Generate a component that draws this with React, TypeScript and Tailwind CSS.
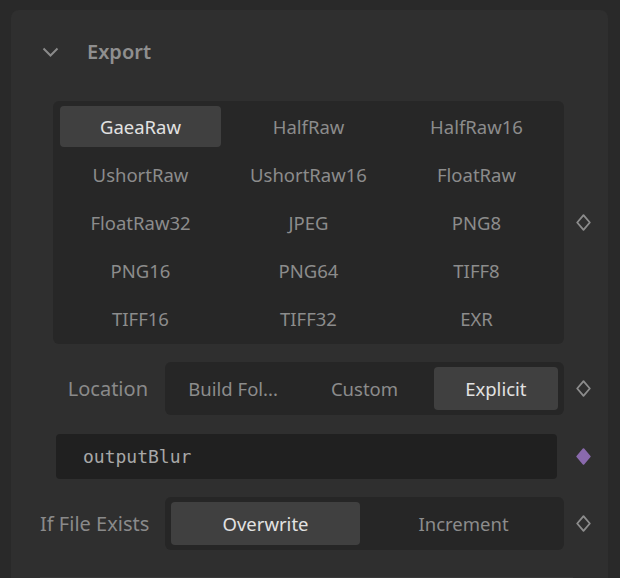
import type { FC } from "react";

const FORMATS = [
    "GaeaRaw", "HalfRaw", "HalfRaw16",
    "UshortRaw", "UshortRaw16", "FloatRaw",
    "FloatRaw32", "JPEG", "PNG8",
    "PNG16", "PNG64", "TIFF8",
    "TIFF16", "TIFF32", "EXR",
];

const font = { fontFamily: '"Noto Sans", "Open Sans", sans-serif' };

const Diamond: FC<{ filled?: boolean }> = ({ filled }) => (
    <svg width="15" height="17" viewBox="0 0 15 17">
        <polygon
            points="7.5,1.2 13.8,8.5 7.5,15.8 1.2,8.5"
            fill={filled ? "#8a6aad" : "none"}
            stroke={filled ? "#8a6aad" : "#8c8c8c"}
            strokeWidth="1.8"
            strokeLinejoin="round"
        />
    </svg>
);

const Segmented: FC<{ options: string[]; value: string; gap: string }> = ({ options, value, gap }) => (
    <div className={`flex w-[399px] rounded-md bg-[#262626] px-[6px] py-[5px] ${gap}`}>
        {options.map((o) => (
            <div
                key={o}
                className={`flex h-[43px] flex-1 items-center justify-center rounded-[4px] text-[18.5px] ${
                    o === value ? "bg-[#404040] text-[#e2e2e2]" : "text-[#8c8c8c]"
                }`}
            >
                {o}
            </div>
        ))}
    </div>
);

export default function App() {
    return (
        <div className="h-[578px] w-[620px] overflow-hidden bg-[#292929] pl-[11px] pt-[10px]" style={font}>
            <div className="h-[600px] w-[597px] rounded-lg bg-[#2f2f2f] pl-[29px]">
                <div className="flex h-[84px] items-center pl-[2px]">
                    <svg width="17" height="10" viewBox="0 0 17 10">
                        <polyline points="1.5,1.5 8.5,8.5 15.5,1.5" fill="none" stroke="#8a8a8a" strokeWidth="2" />
                    </svg>
                    <span className="ml-[28px] text-[20px] font-semibold text-[#8f8f8f]">Export</span>
                </div>

                <div className="mt-[7px] flex items-center">
                    <div className="w-[524px]">
                        <div className="ml-[13px] grid w-[511px] grid-cols-3 gap-[7px] rounded-md bg-[#272727] px-[7px] py-[5px]">
                            {FORMATS.map((f) => (
                                <div
                                    key={f}
                                    className={`flex h-[41px] items-center justify-center rounded-[4px] pt-[1px] text-[18.5px] ${
                                        f === "GaeaRaw" ? "bg-[#404040] text-[#e2e2e2]" : "text-[#8c8c8c]"
                                    }`}
                                >
                                    {f}
                                </div>
                            ))}
                        </div>
                    </div>
                    <div className="flex w-[39px] justify-center">
                        <Diamond />
                    </div>
                </div>

                <div className="mt-[18px] flex items-center">
                    <div className="flex w-[524px] items-center">
                        <div className="w-[108px] text-right text-[20px] text-[#8a8a8a]">Location</div>
                        <div className="ml-[17px]">
                            <Segmented options={["Build Fol...", "Custom", "Explicit"]} value="Explicit" gap="gap-[7px]" />
                        </div>
                    </div>
                    <div className="flex w-[39px] justify-center">
                        <Diamond />
                    </div>
                </div>

                <div className="mt-[19px] flex items-center">
                    <div className="w-[524px]">
                        <div
                            className="ml-[16px] flex h-[45px] w-[501px] items-center rounded-[4px] bg-[#202020] pl-[27px] text-[18px] text-[#a8a8a8]"
                            style={{ fontFamily: '"DejaVu Sans Mono", "Liberation Mono", monospace' }}
                        >
                            outputBlur
                        </div>
                    </div>
                    <div className="flex w-[39px] justify-center">
                        <Diamond filled />
                    </div>
                </div>

                <div className="mt-[18px] flex items-center">
                    <div className="flex w-[524px] items-center">
                        <div className="w-[108px] whitespace-nowrap text-right text-[20px] text-[#8a8a8a]">If File Exists</div>
                        <div className="ml-[17px]">
                            <Segmented options={["Overwrite", "Increment"]} value="Overwrite" gap="gap-[9px]" />
                        </div>
                    </div>
                    <div className="flex w-[39px] justify-center">
                        <Diamond />
                    </div>
                </div>

                <div className="mt-[27px] mr-[35px] border-t border-[#383838]" />
            </div>
        </div>
    );
}
